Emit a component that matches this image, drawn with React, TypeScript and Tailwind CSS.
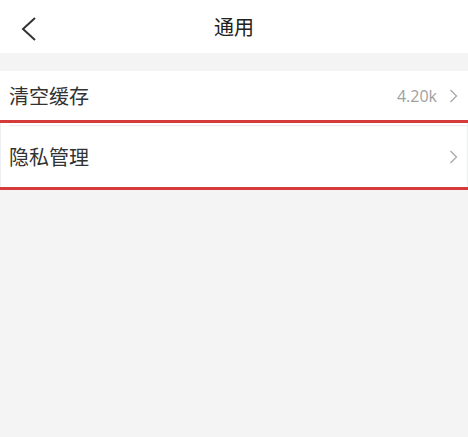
function Chevron() {
  return (
    <svg width="9" height="16" viewBox="0 0 9 16" fill="none">
      <path d="M1.5 2 L7.5 8 L1.5 14" stroke="#a8a8a8" strokeWidth="1.3" />
    </svg>
  );
}

export default function App() {
  return (
    <div
      className="w-[468px] h-[437px] bg-[#f4f4f4] flex flex-col overflow-hidden"
      style={{ fontFamily: '"Noto Sans CJK SC", "Noto Sans", sans-serif' }}
    >
      {/* Header */}
      <div className="h-[53px] bg-white relative flex items-center justify-center">
        <svg className="absolute left-[20px] top-[16px]" width="18" height="26" viewBox="0 0 18 26" fill="none">
          <path d="M15 2 L3 13 L15 24" stroke="#333" strokeWidth="2" />
        </svg>
        <span className="text-[20px] text-[#222] leading-none">通用</span>
      </div>

      <div className="h-[18px]" />

      {/* Clear cache */}
      <div className="h-[49px] bg-white flex items-center justify-between pl-[9px] pr-[10px]">
        <span className="text-[20px] text-[#333] leading-none">清空缓存</span>
        <div className="flex items-center gap-[12px]">
          <span className="text-[16px] text-[#a0a0a0] leading-none" style={{ fontFamily: '"Open Sans", sans-serif' }}>
            4.20k
          </span>
          <Chevron />
        </div>
      </div>
      <div className="h-[3px] bg-[#d63b3b]" />

      {/* Privacy */}
      <div className="h-[64px] bg-white border-x border-[#eceef2] flex flex-col">
        <div className="h-px ml-[8px] bg-[#e8ebf2] mt-[2px]" />
        <div className="flex-1 flex items-center justify-between pl-[8px] pr-[9px]">
          <span className="text-[20px] text-[#333] leading-none">隐私管理</span>
          <Chevron />
        </div>
      </div>
      <div className="h-[3px] bg-[#d63b3b]" />
    </div>
  );
}
